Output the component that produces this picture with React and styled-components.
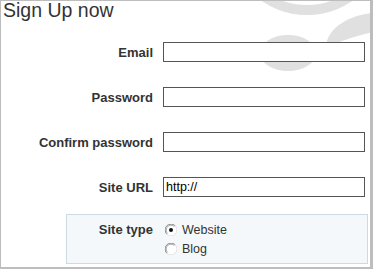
import React from "react";
import styled, { createGlobalStyle } from "styled-components";

const Global = createGlobalStyle`
  html, body { margin: 0; padding: 0; background: #fff; }
  body { font-family: "Liberation Sans", Arial, sans-serif; }
`;

const Frame = styled.div`
  position: relative;
  width: 373px;
  height: 269px;
  box-sizing: border-box;
  border-style: solid;
  border-color: #bdbdbd;
  border-width: 1px 3px 2px 1px;
  overflow: hidden;
  background: #fff;
`;

const Decor = styled.svg`
  position: absolute;
  left: -1px;
  top: -1px;
  width: 373px;
  height: 269px;
  z-index: 0;
`;

const Content = styled.div`
  position: relative;
  z-index: 1;
`;

const Title = styled.h1`
  margin: 0;
  padding-left: 2px;
  font-family: "Liberation Sans", Arial, sans-serif;
  font-weight: normal;
  font-size: 19.5px;
  line-height: 18px;
  color: #333;
`;

const Form = styled.form`
  margin: 23px 0 0 0;
  display: grid;
  grid-template-columns: 152px 202px;
  column-gap: 10px;
  row-gap: 25px;
  align-items: center;
`;

const Label = styled.label`
  text-align: right;
  font-weight: bold;
  font-size: 13px;
  color: #333;
  white-space: nowrap;
`;

const Input = styled.input`
  box-sizing: border-box;
  width: 202px;
  height: 20px;
  margin: 0;
  padding: 0 2px;
  border: 1px solid #555;
  background: #fff;
  font-family: "Liberation Sans", Arial, sans-serif;
  font-size: 12.5px;
  color: #000;
  outline: none;
`;

const TypeBox = styled.div`
  margin: 17px 0 0 65px;
  box-sizing: border-box;
  width: 302px;
  height: 50px;
  border: 1px solid #cbdbe6;
  background: #f5f8fa;
  padding-top: 6px;
  display: grid;
  grid-template-columns: 86px auto;
  column-gap: 12px;
  align-items: start;
`;

const TypeLabel = styled(Label)`
  line-height: 18px;
`;

const Options = styled.div`
  display: flex;
  flex-direction: column;
  gap: 1px;
`;

const Option = styled.label`
  display: flex;
  align-items: center;
  gap: 5px;
  height: 18px;
  font-size: 12.5px;
  color: #333;
  cursor: pointer;
`;

const RadioSvg = styled.svg`
  width: 12px;
  height: 12px;
  flex: none;
`;

function Radio({ checked }) {
  return (
    <RadioSvg viewBox="0 0 12 12">
      <circle cx="6" cy="6" r="5.5" fill="#fff" />
      <path d="M1.8 10.2 A5.5 5.5 0 0 1 10.2 1.8" fill="none" stroke="#8a8a8a" strokeWidth="1" />
      <path d="M10.2 1.8 A5.5 5.5 0 0 1 1.8 10.2" fill="none" stroke="#e2e2e2" strokeWidth="1" />
      <path d="M2.6 9.4 A4.5 4.5 0 0 1 9.4 2.6" fill="none" stroke="#404040" strokeWidth="0.8" opacity="0.55" />
      {checked && <circle cx="6" cy="6" r="2" fill="#111" />}
    </RadioSvg>
  );
}

export default function App() {
  return (
    <>
      <Global />
      <Frame>
        <Decor viewBox="0 0 373 269">
          <circle cx="307" cy="-65" r="75" fill="none" stroke="#e0e0e0" strokeWidth="10" />
          <ellipse cx="288" cy="53" rx="28" ry="18" fill="#e0e0e0" />
          <path d="M326 47 C327 30 345 16 373 13 L373 32 C355 36 338 42 326 47 Z" fill="#e0e0e0" />
        </Decor>
        <Content>
          <Title>Sign Up now</Title>
          <Form onSubmit={(e) => e.preventDefault()}>
            <Label htmlFor="email">Email</Label>
            <Input id="email" type="text" />
            <Label htmlFor="pw">Password</Label>
            <Input id="pw" type="password" />
            <Label htmlFor="pw2">Confirm password</Label>
            <Input id="pw2" type="password" />
            <Label htmlFor="url">Site URL</Label>
            <Input id="url" type="text" defaultValue="http://" />
          </Form>
          <TypeBox>
            <TypeLabel>Site type</TypeLabel>
            <Options>
              <Option>
                <Radio checked />
                Website
              </Option>
              <Option>
                <Radio />
                Blog
              </Option>
            </Options>
          </TypeBox>
        </Content>
      </Frame>
    </>
  );
}
